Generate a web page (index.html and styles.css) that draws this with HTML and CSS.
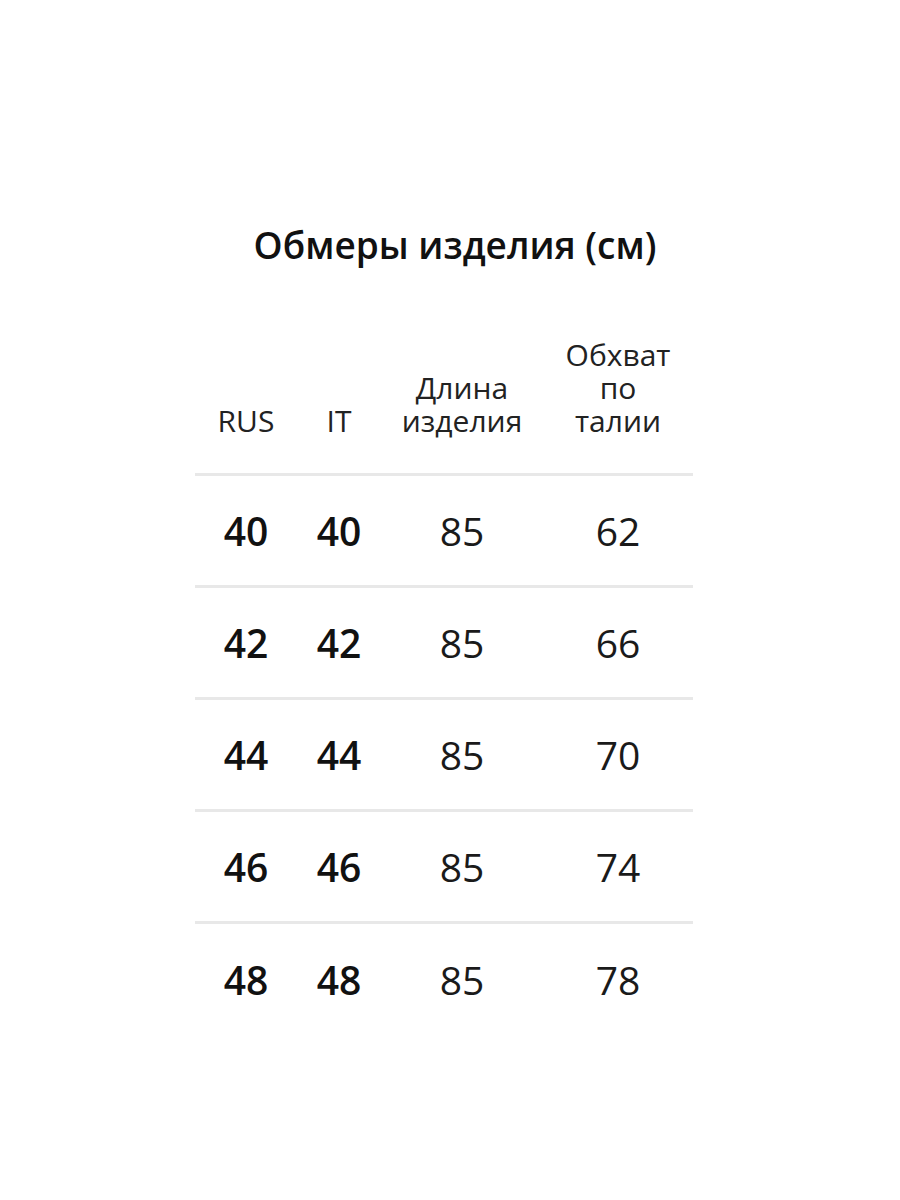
FILE: index.html
```html
<!DOCTYPE html>
<html lang="ru">
<head>
<meta charset="utf-8">
<link rel="stylesheet" href="styles.css">
</head>
<body>
<div class="page">
  <h1 class="title">Обмеры изделия (см)</h1>
  <div class="table">
    <div class="row head">
      <div class="cell">RUS</div>
      <div class="cell">IT</div>
      <div class="cell">Длина<br>изделия</div>
      <div class="cell">Обхват<br>по<br>талии</div>
    </div>
    <div class="row">
      <div class="cell size">40</div><div class="cell size">40</div><div class="cell">85</div><div class="cell">62</div>
    </div>
    <div class="row">
      <div class="cell size">42</div><div class="cell size">42</div><div class="cell">85</div><div class="cell">66</div>
    </div>
    <div class="row">
      <div class="cell size">44</div><div class="cell size">44</div><div class="cell">85</div><div class="cell">70</div>
    </div>
    <div class="row">
      <div class="cell size">46</div><div class="cell size">46</div><div class="cell">85</div><div class="cell">74</div>
    </div>
    <div class="row last">
      <div class="cell size">48</div><div class="cell size">48</div><div class="cell">85</div><div class="cell">78</div>
    </div>
  </div>
</div>
</body>
</html>
```

FILE: styles.css
```css
html, body {
  margin: 0;
  padding: 0;
  background: #ffffff;
}
body {
  font-family: "Open Sans", "Noto Sans", sans-serif;
  color: #1a1a1a;
}
.page {
  width: 900px;
  height: 1200px;
  padding-top: 220px;
  box-sizing: border-box;
}
.title {
  margin: 0;
  padding-left: 10px;
  text-align: center;
  font-size: 37px;
  font-weight: 600;
  line-height: 50px;
  color: #111;
}
.table {
  margin-left: 195px;
  width: 498px;
  margin-top: 58px;
}
.row {
  display: grid;
  grid-template-columns: 102px 84px 162px 150px;
  height: 112px;
  align-items: center;
  border-bottom: 3px solid #e8e8e8;
  box-sizing: border-box;
}
.row.last {
  border-bottom: none;
}
.row.head {
  height: 148px;
  align-items: end;
  padding-bottom: 36px;
}
.cell {
  text-align: center;
  font-size: 39px;
  line-height: 42px;
  font-weight: 400;
}
.head .cell {
  font-size: 30px;
  line-height: 33px;
  color: #222;
}
.size {
  font-weight: 600;
  color: #111;
}
```
